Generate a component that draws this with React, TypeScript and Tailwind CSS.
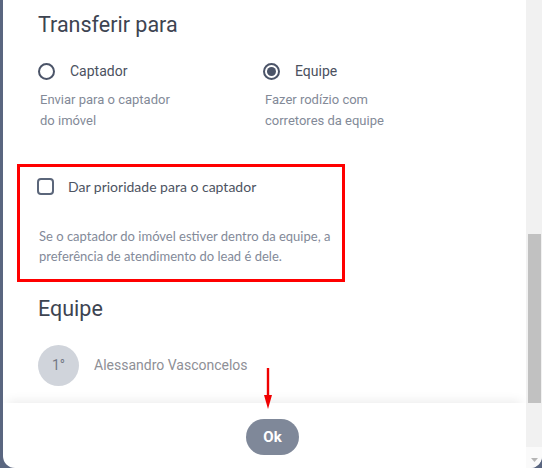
import React, { useState } from 'react';

const Radio: React.FC<{ checked: boolean }> = ({ checked }) => (
    <span className="w-[17px] h-[17px] rounded-full border-2 border-[#4b5468] flex items-center justify-center shrink-0">
        {checked && <span className="w-[9px] h-[9px] rounded-full bg-[#4b5468]" />}
    </span>
);

const App: React.FC = () => {
    const [target, setTarget] = useState<'captador' | 'equipe'>('equipe');
    const [priority, setPriority] = useState(false);

    const options = [
        { key: 'captador' as const, label: 'Captador', desc: ['Enviar para o captador', 'do imóvel'] },
        { key: 'equipe' as const, label: 'Equipe', desc: ['Fazer rodízio com', 'corretores da equipe'] },
    ];

    return (
        <div className="w-[542px] h-[468px] bg-[#5a6680] pl-[3px] overflow-hidden font-['Roboto',sans-serif]">
            <div className="relative w-full h-full bg-white rounded-b-[12px] overflow-hidden flex flex-col">
                <div className="flex h-[403px]">
                    <div className="flex-1 pl-[35px] pt-[11px]">
                        <h2 className="text-[21.5px] leading-[28px] text-[#3d4451]">Transferir para</h2>

                        <div className="grid grid-cols-[225px_225px] mt-[22px]">
                            {options.map((o) => (
                                <div key={o.key}>
                                    <button
                                        onClick={() => setTarget(o.key)}
                                        className="flex items-center gap-[15px] h-[20px] text-[14px] text-[#4b5160]"
                                    >
                                        <Radio checked={target === o.key} />
                                        {o.label}
                                    </button>
                                    <p className="mt-[8px] pl-[2px] text-[13px] leading-[21px] text-[#838a98]">
                                        {o.desc[0]}
                                        <br />
                                        {o.desc[1]}
                                    </p>
                                </div>
                            ))}
                        </div>

                        <div className="-ml-[21px] mt-[33px] w-[328px] border-[3px] border-[#ff0000] pl-[17px] pt-[10px] pb-[13px] font-['Lato',sans-serif]">
                            <button
                                onClick={() => setPriority(!priority)}
                                className="flex items-center gap-[14px] h-[18px] text-[14px] text-[#4d5462]"
                            >
                                <span className="w-[17px] h-[17px] rounded-[4px] border-2 border-[#5b667a] shrink-0" />
                                Dar prioridade para o captador
                            </button>
                            <p className="mt-[31px] pl-[2px] text-[13px] leading-[20px] text-[#838a99]">
                                Se o captador do imóvel estiver dentro da equipe, a
                                <br />
                                preferência de atendimento do lead é dele.
                            </p>
                        </div>

                        <h2 className="mt-[13px] text-[21.5px] leading-[28px] text-[#3d4451]">Equipe</h2>

                        <div className="flex items-center gap-[15px] mt-[22px]">
                            <div className="w-[41px] h-[41px] rounded-full bg-[#d0d4db] flex items-center justify-center text-[14px] text-[#737985]">
                                1°
                            </div>
                            <span className="text-[14px] text-[#8e8f96]">Alessandro Vasconcelos</span>
                        </div>
                    </div>

                    <div className="w-[16px] bg-[#f1f1f1] flex flex-col pl-[2px] pr-[1px] pt-[234px]">
                        <div className="flex-1 bg-[#c1c1c1]" />
                    </div>
                </div>

                <div className="flex flex-1">
                    <div className="flex-1 flex justify-center pl-[16px] pt-[16px] shadow-[0_-7px_10px_-5px_rgba(0,0,0,0.08)]">
                        <button className="w-[53px] h-[36px] rounded-full bg-[#7f8899] text-white font-bold text-[15px]">
                            Ok
                        </button>
                    </div>
                    <div className="w-[16px] flex flex-col">
                        <div className="h-[44px] bg-[#f1f1f1]" />
                        <div className="flex-1 bg-[#fafafa] flex justify-center pt-[11px]">
                            <svg width="7" height="4" viewBox="0 0 7 4">
                                <path d="M0 0h7L3.5 4z" fill="#b5b5b5" />
                            </svg>
                        </div>
                    </div>
                </div>

                <svg className="absolute left-[259px] top-[368px]" width="12" height="42" viewBox="0 0 12 42">
                    <line x1="6" y1="0" x2="6" y2="30" stroke="#f00000" strokeWidth="2.4" />
                    <path d="M2 27h8l-4 14z" fill="#f00000" />
                </svg>
            </div>
        </div>
    );
};

export default App;
